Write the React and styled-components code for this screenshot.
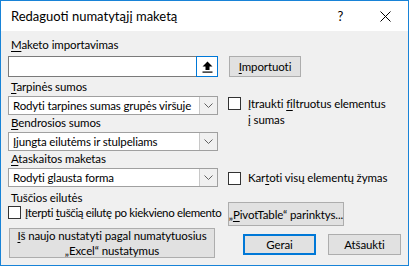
import styled, { createGlobalStyle } from 'styled-components';

const GlobalStyle = createGlobalStyle`
    html, body {
        margin: 0;
        padding: 0;
        background: #ffffff;
    }
    * {
        box-sizing: border-box;
    }
`

const Window = styled.div`
    width: 409px;
    height: 266px;
    border: 1px solid #1883d7;
    display: flex;
    flex-direction: column;
    font-family: Lato, "Noto Sans", sans-serif;
    font-size: 11.5px;
    letter-spacing: -0.1px;
    color: #000;
    background: #f0f0f0;
    overflow: hidden;
`

const TitleBar = styled.div`
    height: 30px;
    flex: none;
    background: #fff;
    display: flex;
    align-items: center;
    padding-left: 10px;
    font-size: 13px;
    letter-spacing: 0;
`

const Title = styled.span`
    flex: 1;
`

const TitleButton = styled.span`
    width: 45px;
    display: flex;
    justify-content: center;
    align-items: center;
    font-size: 13px;
`

const Body = styled.div`
    padding: 6px 8px 0 6px;
    display: flex;
    flex-direction: column;
`

const Label = styled.div`
    height: ${p => p.$h || 16}px;
    line-height: 16px;
    padding-left: 4px;
    margin-top: ${p => p.$top || 0}px;
    white-space: nowrap;
`

const Key = styled.span`
    text-decoration: underline;
    text-underline-offset: 2px;
`

const ImportRow = styled.div`
    display: flex;
    align-items: center;
    margin-top: 3px;
    padding-left: 1px;
`

const FileInput = styled.div`
    width: 210px;
    height: 21px;
    background: #fff;
    border: 1px solid #7a7a7a;
    display: flex;
    justify-content: flex-end;
`

const UploadButton = styled.div`
    width: 22px;
    height: 21px;
    margin: -1px -1px 0 0;
    border: 1px solid #0078d7;
    background: #fff;
    display: flex;
    align-items: center;
    justify-content: center;
`

const Button = styled.div`
    width: ${p => p.$w}px;
    height: ${p => p.$h || 22}px;
    background: #e1e1e1;
    border: ${p => p.$default ? '2px solid #0078d7' : '1px solid #adadad'};
    display: flex;
    align-items: center;
    justify-content: center;
    text-align: center;
    line-height: 15px;
    white-space: nowrap;
    flex: none;
`

const Grid = styled.div`
    display: grid;
    grid-template-columns: 211px 1fr;
    column-gap: 10px;
    margin-top: ${p => p.$top || 0}px;
`

const Select = styled.div`
    width: 210px;
    height: 19px;
    margin-left: 1px;
    background: #fff;
    border: 1px solid #a0a0a0;
    display: flex;
    align-items: center;
    padding-left: 4px;
    margin-top: ${p => p.$top || 0}px;
`

const SelectText = styled.span`
    flex: 1;
    white-space: nowrap;
    overflow: hidden;
    letter-spacing: -0.15px;
`

const DropButton = styled.div`
    width: 18px;
    height: 17px;
    border-left: 1px solid #c8c8c8;
    background: #f0f0f0;
    display: flex;
    align-items: center;
    justify-content: center;
    flex: none;
`

const CheckRow = styled.div`
    display: flex;
    align-items: flex-start;
    gap: ${p => p.$gap || 7}px;
    margin-top: ${p => p.$top || 0}px;
    padding-left: ${p => p.$left || 0}px;
    line-height: 16px;
    white-space: nowrap;
    letter-spacing: ${p => p.$tight ? '-0.35px' : '-0.1px'};
`

const Box = styled.span`
    width: 13px;
    height: 13px;
    flex: none;
    border: 1px solid #333;
    background: #fff;
    margin-top: ${p => p.$top ?? 1}px;
`

const Actions = styled.div`
    display: flex;
    gap: 12px;
    margin-top: 6px;
    padding-left: 15px;
`

function Chevron() {
    return (
        <svg width="9" height="5" viewBox="0 0 9 5">
            <polyline points="0.5,0.5 4.5,4.5 8.5,0.5" fill="none" stroke="#606060" strokeWidth="1" />
        </svg>
    )
}

function Dropdown({ children, top }) {
    return (
        <Select $top={top}>
            <SelectText>{children}</SelectText>
            <DropButton><Chevron /></DropButton>
        </Select>
    )
}

export default function App() {
    return (
        <>
            <GlobalStyle />
            <Window>
                <TitleBar>
                    <Title>Redaguoti numatytąjį maketą</Title>
                    <TitleButton>?</TitleButton>
                    <TitleButton>
                        <svg width="11" height="11" viewBox="0 0 11 11">
                            <path d="M0.5 0.5 L10.5 10.5 M10.5 0.5 L0.5 10.5" stroke="#000" strokeWidth="1" />
                        </svg>
                    </TitleButton>
                </TitleBar>
                <Body>
                    <Label><Key>M</Key>aketo importavimas</Label>
                    <ImportRow>
                        <FileInput>
                            <UploadButton>
                                <svg width="11" height="12" viewBox="0 0 11 12">
                                    <path d="M5.5 0.5 L10.5 5.5 L7.5 5.5 L7.5 9 L3.5 9 L3.5 5.5 L0.5 5.5 Z" fill="#000" />
                                    <rect x="0.5" y="10.5" width="10" height="1.2" fill="#000" />
                                </svg>
                            </UploadButton>
                        </FileInput>
                        <Button $w={72} $h={21} style={{ marginLeft: 11 }}><span><Key>I</Key>mportuoti</span></Button>
                    </ImportRow>
                    <Grid $top={2}>
                        <div>
                            <Label><Key>T</Key>arpinės sumos</Label>
                            <Dropdown top={1}>Rodyti tarpines sumas grupės viršuje</Dropdown>
                            <Label><Key>B</Key>endrosios sumos</Label>
                            <Dropdown top={1}>Įjungta eilutėms ir stulpeliams</Dropdown>
                            <Label><Key>A</Key>taskaitos maketas</Label>
                            <Dropdown top={1}>Rodyti glausta forma</Dropdown>
                        </div>
                        <div>
                            <CheckRow $top={17}>
                                <Box $top={1} />
                                <span>Įtraukti <Key>fi</Key>ltruotus elementus<br />į sumas</span>
                            </CheckRow>
                            <CheckRow $top={42}>
                                <Box $top={2} />
                                <span>Kar<Key>t</Key>oti visų elementų žymas</span>
                            </CheckRow>
                        </div>
                    </Grid>
                    <Label $top={3} $h={12}>Tuščios eilutės</Label>
                    <Grid>
                        <CheckRow $top={3} $left={1} $gap={4} $tight>
                            <Box />
                            <span>Įterpti <Key>t</Key>uščią eilutę po kiekvieno elemento</span>
                        </CheckRow>
                        <Button $w={116} $h={24}><span>„<Key>P</Key>ivotTable“ parinktys...</span></Button>
                    </Grid>
                    <Grid $top={2}>
                        <Button $w={206} $h={30} style={{ marginLeft: 2 }}>
                            <span><Key>I</Key>š naujo nustatyti pagal numatytuosius<br />„Excel“ nustatymus</span>
                        </Button>
                        <Actions>
                            <Button $w={73} $h={21} $default>Gerai</Button>
                            <Button $w={73} $h={21}>Atšaukti</Button>
                        </Actions>
                    </Grid>
                </Body>
            </Window>
        </>
    )
}
